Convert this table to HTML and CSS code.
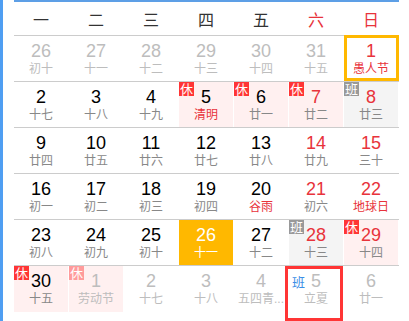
FILE: index.html
```html
<!DOCTYPE html>
<html lang="zh-CN">
<head>
<meta charset="utf-8">
<title>日历</title>
<link rel="stylesheet" href="styles.css">
</head>
<body>
<div class="page">
  <div class="rail"></div>
  <div class="cal">
    <div class="week">
      <span>一</span><span>二</span><span>三</span><span>四</span><span>五</span><span class="we">六</span><span class="we">日</span>
    </div>
    <div class="row">
      <div class="cell other"><b class="num">26</b><i class="lunar">初十</i></div>
      <div class="cell other"><b class="num">27</b><i class="lunar">十一</i></div>
      <div class="cell other"><b class="num">28</b><i class="lunar">十二</i></div>
      <div class="cell other"><b class="num">29</b><i class="lunar">十三</i></div>
      <div class="cell other"><b class="num">30</b><i class="lunar">十四</i></div>
      <div class="cell other"><b class="num">31</b><i class="lunar">十五</i></div>
      <div class="cell weekend fest selected"><b class="num">1</b><i class="lunar">愚人节</i></div>
    </div>
    <div class="row">
      <div class="cell"><b class="num">2</b><i class="lunar">十七</i></div>
      <div class="cell"><b class="num">3</b><i class="lunar">十八</i></div>
      <div class="cell"><b class="num">4</b><i class="lunar">十九</i></div>
      <div class="cell rest fest"><span class="tag">休</span><b class="num">5</b><i class="lunar">清明</i></div>
      <div class="cell rest"><span class="tag">休</span><b class="num">6</b><i class="lunar">廿一</i></div>
      <div class="cell rest weekend"><span class="tag">休</span><b class="num">7</b><i class="lunar">廿二</i></div>
      <div class="cell work weekend"><span class="tag">班</span><b class="num">8</b><i class="lunar">廿三</i></div>
    </div>
    <div class="row">
      <div class="cell"><b class="num">9</b><i class="lunar">廿四</i></div>
      <div class="cell"><b class="num">10</b><i class="lunar">廿五</i></div>
      <div class="cell"><b class="num">11</b><i class="lunar">廿六</i></div>
      <div class="cell"><b class="num">12</b><i class="lunar">廿七</i></div>
      <div class="cell"><b class="num">13</b><i class="lunar">廿八</i></div>
      <div class="cell weekend"><b class="num">14</b><i class="lunar">廿九</i></div>
      <div class="cell weekend"><b class="num">15</b><i class="lunar">三十</i></div>
    </div>
    <div class="row">
      <div class="cell"><b class="num">16</b><i class="lunar">初一</i></div>
      <div class="cell"><b class="num">17</b><i class="lunar">初二</i></div>
      <div class="cell"><b class="num">18</b><i class="lunar">初三</i></div>
      <div class="cell"><b class="num">19</b><i class="lunar">初四</i></div>
      <div class="cell fest"><b class="num">20</b><i class="lunar">谷雨</i></div>
      <div class="cell weekend"><b class="num">21</b><i class="lunar">初六</i></div>
      <div class="cell weekend fest"><b class="num">22</b><i class="lunar">地球日</i></div>
    </div>
    <div class="row">
      <div class="cell"><b class="num">23</b><i class="lunar">初八</i></div>
      <div class="cell"><b class="num">24</b><i class="lunar">初九</i></div>
      <div class="cell"><b class="num">25</b><i class="lunar">初十</i></div>
      <div class="cell today"><b class="num">26</b><i class="lunar">十一</i></div>
      <div class="cell"><b class="num">27</b><i class="lunar">十二</i></div>
      <div class="cell work weekend"><span class="tag">班</span><b class="num">28</b><i class="lunar">十三</i></div>
      <div class="cell rest weekend"><span class="tag">休</span><b class="num">29</b><i class="lunar">十四</i></div>
    </div>
    <div class="row">
      <div class="cell rest"><span class="tag">休</span><b class="num">30</b><i class="lunar">十五</i></div>
      <div class="cell rest other"><span class="tag">休</span><b class="num">1</b><i class="lunar">劳动节</i></div>
      <div class="cell other"><b class="num">2</b><i class="lunar">十七</i></div>
      <div class="cell other"><b class="num">3</b><i class="lunar">十八</i></div>
      <div class="cell other"><b class="num">4</b><i class="lunar">五四青...</i></div>
      <div class="cell other work-plain hover"><span class="tag">班</span><b class="num">5</b><i class="lunar">立夏</i></div>
      <div class="cell other"><b class="num">6</b><i class="lunar">廿一</i></div>
    </div>
  </div>
</div>
</body>
</html>
```
FILE: styles.css
```css
* { box-sizing: border-box; }
html, body { margin: 0; padding: 0; background: #fff; }
body {
  font-family: "Liberation Sans", "Noto Sans CJK SC", sans-serif;
  color: #000;
}
.page { display: flex; height: 321px; overflow: hidden; }
.rail { flex: none; width: 3px; background: #4f9ef2; }
.cal {
  margin-left: 11px;
  width: 385px;
  border-top: 2px solid #5d9fe6;
}
.week {
  display: grid;
  grid-template-columns: repeat(7, 54px);
  column-gap: 1px;
  height: 34px;
  align-items: center;
  border-bottom: 1px solid #cccccc;
}
.week span {
  text-align: center;
  font-family: "Noto Sans CJK SC", sans-serif;
  font-size: 16px;
  line-height: 20px;
  color: #333;
}
.week .we { color: #e8333b; }
.row {
  display: grid;
  grid-template-columns: repeat(7, 54px);
  column-gap: 1px;
  height: 46px;
  border-bottom: 1px solid #cccccc;
}
.row:last-child { border-bottom: none; }
.cell {
  position: relative;
  text-align: center;
  padding-top: 4px;
  min-width: 0;
}
.num {
  display: block;
  font-weight: normal;
  font-size: 18px;
  line-height: 22px;
  color: #000;
}
.lunar {
  display: block;
  font-style: normal;
  font-size: 12px;
  line-height: 15px;
  color: #888;
  white-space: nowrap;
}
.weekend .num { color: #e8333b; }
.fest .lunar { color: #e8333b; }
.rest { background: #fff0f0; }
.work { background: #f4f4f4; }
.other .num, .other .lunar { color: #bdbdbd; }
.today { background: #ffb800; }
.today .num, .today .lunar { color: #fff; }
.tag {
  position: absolute;
  top: 0;
  left: 0;
  padding: 0 1px;
  font-family: "Noto Sans CJK SC", sans-serif;
  font-size: 13px;
  line-height: 14px;
  color: #fff;
  background: #ff3535;
}
.work .tag { background: #999; }
.rest.other .tag { background: #ff9b9b; }
.work-plain .tag {
  background: none;
  color: #3a8ee6;
  top: 9px;
  left: 2px;
}
.selected::after {
  content: "";
  position: absolute;
  top: -1px;
  left: 0;
  right: -1px;
  bottom: 0;
  border: 3px solid #ffb800;
}
.hover::after {
  content: "";
  position: absolute;
  top: 0;
  left: -4px;
  right: 0;
  bottom: -9px;
  border: 3px solid #ff3535;
}
```
